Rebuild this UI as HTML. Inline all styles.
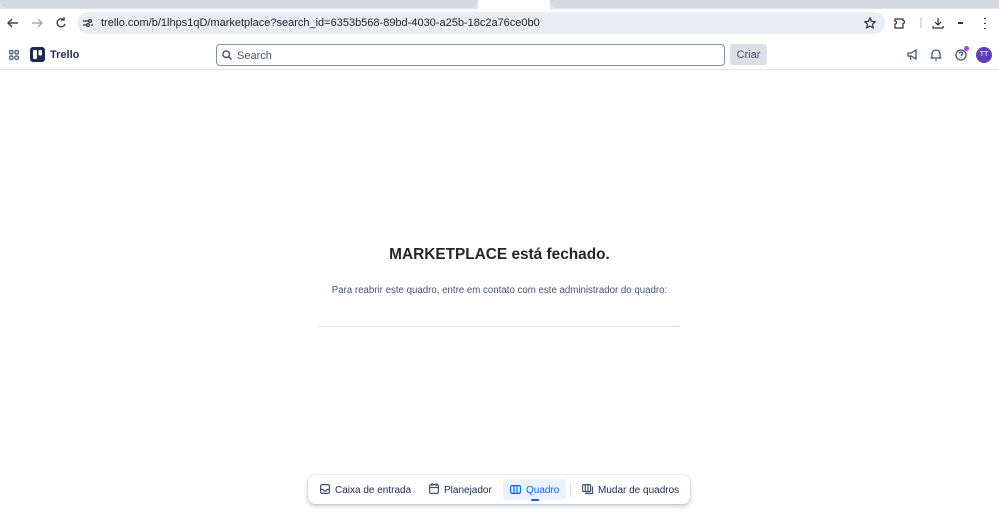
<!DOCTYPE html>
<html><head><meta charset="utf-8"><style>
*{box-sizing:border-box;margin:0;padding:0}
body{width:999px;height:512px;overflow:hidden;background:#fff;font-family:"Liberation Sans",sans-serif;position:relative;color:#172b4d}
.tabbar{position:absolute;left:0;top:0;width:999px;height:9px;background:#dfe3eb}
.tab{position:absolute;top:-4px;left:0;width:478px;height:12px;background:#d3d8e2;border-radius:0 0 8px 8px}
.tab2{position:absolute;top:-4px;left:550px;width:449px;height:12px;background:#d3d8e2;border-radius:0 0 0 8px}
.white{position:absolute;left:478px;top:0;width:72px;height:9px;background:#fff}
.addr{position:absolute;left:77px;top:12px;width:808px;height:22px;border-radius:11px;background:#e9eef6;font-size:11px;color:#1f1f1f;line-height:22px;padding-left:24px}
.hdr{position:absolute;left:0;top:39px;width:999px;height:31px;border-bottom:1px solid #e4e6ea}
.search{position:absolute;left:216px;top:44px;width:509px;height:22px;border:1px solid #8590a2;border-radius:4px;font-size:11px;color:#44546f;line-height:22px;padding-left:20px}
.criar{position:absolute;left:730px;top:44px;width:37px;height:21px;background:#dcdfe4;border-radius:3px;font-size:11px;color:#44546f;text-align:center;line-height:22px}
.ic{position:absolute}
h1{position:absolute;left:0;width:999px;top:246px;text-align:center;font-size:15.4px;font-weight:bold;color:#22272e}
.p{position:absolute;left:0;width:999px;top:285px;text-align:center;font-size:9.7px;color:#44546f}
.line{position:absolute;left:319px;top:326px;width:360px;height:1px;background:#dcdfe4}
.nav{position:absolute;left:308px;top:475px;width:382px;height:29px;border-radius:7px;background:#fff;box-shadow:0 2px 5px rgba(9,30,66,.25),0 0 1px rgba(9,30,66,.3);font-size:10px;color:#172b4d}
.nav span{position:absolute;top:1px;line-height:29px}
</style></head><body>
<div class="tabbar"><div class="tab"></div><div class="white"></div><div class="tab2"></div></div>
<svg class="ic" style="left:6px;top:16px" width="70" height="14" stroke="#444" fill="none" stroke-width="1.4"><path d="M12 7H2M6 3L2 7l4 4"/><path d="M26 7h10M32 3l4 4-4 4" stroke="#aaa"/><path d="M58 4a4 4 0 1 0 1 4M58 1v3h-3"/></svg>
<div class="addr">trello.com/b/1lhps1qD/marketplace?search_id=6353b568-89bd-4030-a25b-18c2a76ce0b0</div>
<svg class="ic" style="left:83px;top:18px" width="10" height="10" stroke="#333" fill="none" stroke-width="1.2"><path d="M0 3h5M0 7h3M8 7h2"/><circle cx="7" cy="3" r="1.4"/><circle cx="5" cy="7" r="1.4"/></svg>
<svg class="ic" style="left:864px;top:17px" width="130" height="13" stroke="#333" fill="none" stroke-width="1.2"><path d="M6 1l1.6 3.4 3.6.4-2.7 2.4.8 3.6L6 9 2.7 10.8l.8-3.6L.8 4.8l3.6-.4z"/><path d="M35 2h4v1.5a1.5 1.5 0 0 1 0 3V11h-8V7a1.5 1.5 0 0 0 0-3V2z"/><path d="M57 0v11" stroke="#bcd"/><path d="M74 1v7M71 5l3 3 3-3M69 9v2h10V9"/><path d="M94 6h5" stroke-width="2"/><path d="M121 1v1M121 6v1M121 11v1" stroke-width="2"/></svg>
<div class="hdr"></div>
<svg class="ic" style="left:9px;top:50px" width="10" height="10" stroke="#44546f" fill="none" stroke-width="1.2"><rect x=".6" y=".6" width="3.3" height="3.3" rx="1"/><rect x="6" y=".6" width="3.3" height="3.3" rx="1"/><rect x=".6" y="6" width="3.3" height="3.3" rx="1"/><rect x="6" y="6" width="3.3" height="3.3" rx="1"/></svg>
<svg class="ic" style="left:30px;top:47px" width="15" height="15"><rect width="15" height="15" rx="3" fill="#1d2d4f"/><rect x="3" y="3" width="4" height="9" rx="1" fill="#fff"/><rect x="8.5" y="3" width="3.5" height="5.5" rx="1" fill="#fff"/></svg>
<div style="position:absolute;left:50px;top:49px;font-size:11px;font-weight:bold;color:#1d2d4f">Trello</div>
<div class="search">Search</div>
<svg class="ic" style="left:222px;top:50px" width="10" height="10" stroke="#44546f" fill="none" stroke-width="1.4"><circle cx="4.2" cy="4.2" r="3.3"/><path d="M6.7 6.7L9.5 9.5"/></svg>
<div class="criar">Criar</div>
<svg class="ic" style="left:907px;top:48px" width="60" height="13" stroke="#44546f" fill="none" stroke-width="1.3"><path d="M1 5h3l5-3v9L4 8H1zM3 8l1 4"/><path d="M25 10V6a4 4 0 0 1 8 0v4h1.5H23.5zM28 12h2"/><circle cx="54" cy="7" r="5"/><path d="M52.5 5.5a1.5 1.5 0 1 1 2 1.5v1M54 9.5v.5"/></svg>
<div style="position:absolute;left:964px;top:46px;width:5px;height:5px;border-radius:50%;background:#a54de0"></div>
<div style="position:absolute;left:976px;top:47px;width:16px;height:16px;border-radius:50%;background:#5e3fb6;color:#fff;font-size:7px;text-align:center;line-height:16px">TT</div>
<h1>MARKETPLACE está fechado.</h1>
<div class="p">Para reabrir este quadro, entre em contato com este administrador do quadro:</div>
<div class="line"></div>
<div class="nav">
<svg class="ic" style="left:12px;top:9px" width="10" height="10" stroke="#44546f" fill="none" stroke-width="1.2"><rect x=".6" y=".6" width="8.8" height="8.8" rx="1.5"/><path d="M.6 5.5h2.5l1 1.5h2l1-1.5h2.5"/></svg>
<span style="left:27px">Caixa de entrada</span>
<svg class="ic" style="left:121px;top:8px" width="10" height="11" stroke="#44546f" fill="none" stroke-width="1.2"><rect x=".6" y="1.6" width="8.8" height="8.8" rx="1.5"/><path d="M.6 4.5h8.8M3 0v3M7 0v3"/></svg>
<span style="left:136px">Planejador</span>
<div style="position:absolute;left:195px;top:4px;width:63px;height:21px;border-radius:4px;background:#e9f2ff"></div>
<div style="position:absolute;left:223px;top:24px;width:8px;height:2px;background:#0c66e4;border-radius:1px"></div>
<svg class="ic" style="left:202px;top:10px" width="11" height="9" stroke="#0c66e4" fill="none" stroke-width="1.2"><rect x=".6" y=".6" width="9.8" height="7.8" rx="1.5"/><path d="M4 .6v7.8M7 .6v7.8"/></svg>
<span style="left:218px;color:#0c66e4">Quadro</span>
<div style="position:absolute;left:262px;top:7px;width:1px;height:15px;background:#dcdfe4"></div>
<svg class="ic" style="left:274px;top:9px" width="12" height="11" stroke="#44546f" fill="none" stroke-width="1.2"><rect x=".6" y=".6" width="8" height="7" rx="1"/><path d="M3.3.6v7M6 .6v7M10.5 2.5v7H3"/></svg>
<span style="left:290px">Mudar de quadros</span>
</div>
</body></html>
